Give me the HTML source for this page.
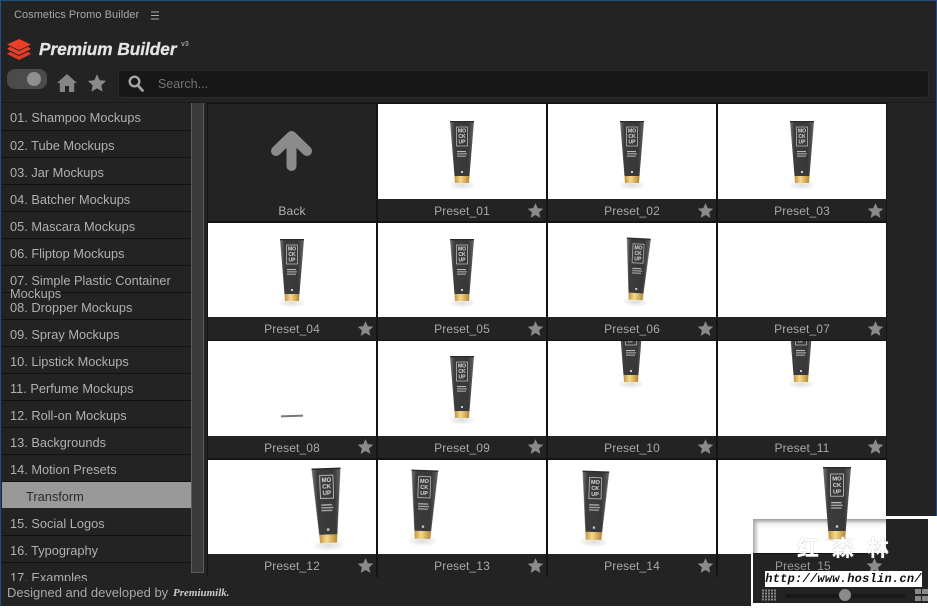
<!DOCTYPE html>
<html><head><meta charset="utf-8"><style>
html,body{margin:0;padding:0;background:#232323}
#r{position:relative;width:937px;height:608px;overflow:hidden;background:#232323;font-family:"Liberation Sans",sans-serif;color:#b4b4b4}
#r div,#r svg{position:absolute}
.frame{left:0;top:0;width:935px;height:606px;border:1px solid #1f4f86;z-index:4;pointer-events:none}
.si{left:2px;width:189px;height:26px;border-bottom:1px solid #111;font-size:12.800px;line-height:27px;text-indent:8px;color:#b0b0b0;white-space:nowrap}
.c{width:168px;height:117px;background:#232323;overflow:hidden}
.w{left:0;top:0;width:168px;height:95px;background:#fff;overflow:hidden}
.l{left:0;top:95px;width:168px;height:22px;line-height:25px;text-align:center;font-size:12px;letter-spacing:.12px;color:#a9a9a9}
.e .w{height:94px}.e .l{top:94px}
.tube{filter:blur(.35px)}
</style></head><body><div id="r">
<svg width="0" height="0" style="left:0;top:0"><defs>
<linearGradient id="g" x1="0" x2="1" y1="0" y2="0"><stop offset="0" stop-color="#777"/><stop offset=".18" stop-color="#3c3c3c"/><stop offset=".75" stop-color="#383838"/><stop offset="1" stop-color="#666"/></linearGradient>
<linearGradient id="cp" x1="0" x2="1" y1="0" y2="0"><stop offset="0" stop-color="#c0913c"/><stop offset=".4" stop-color="#f5d98c"/><stop offset="1" stop-color="#b5862f"/></linearGradient>
<radialGradient id="sh"><stop offset="0" stop-color="#bbb" stop-opacity=".5"/><stop offset="1" stop-color="#bbb" stop-opacity="0"/></radialGradient>
<symbol id="t" viewBox="0 0 24 72" overflow="visible">
<ellipse cx="12" cy="64" rx="15" ry="5" fill="url(#sh)"/>
<path d="M0 0H24L19.500 55H4.500Z" fill="url(#g)"/>
<path d="M0 0H24V1.200H0Z" fill="#2a2a2a"/>
<rect x="6.500" y="6" width="11" height="19" fill="none" stroke="#ddd" stroke-width=".6"/>
<text x="12" y="11.500" text-anchor="middle" font-family="Liberation Sans" font-weight="bold" font-size="5" fill="#ddd">MO</text>
<text x="12" y="17" text-anchor="middle" font-family="Liberation Sans" font-weight="bold" font-size="5" fill="#ddd">CK</text>
<text x="12" y="22.500" text-anchor="middle" font-family="Liberation Sans" font-weight="bold" font-size="5" fill="#ddd">UP</text>
<rect x="7" y="30" width="9" height="1.100" fill="#bbb"/><rect x="7" y="32.300" width="10" height="1.100" fill="#aaa"/><rect x="7" y="34.600" width="9" height="1.100" fill="#aaa"/>
<rect x="11" y="50" width="2" height="2" fill="#ccc"/>
<path d="M4.500 55H19.500L19 62H5Z" fill="url(#cp)"/>
</symbol>
<symbol id="s" viewBox="0 0 24 24"><path d="M12 1.500l3.200 7.200 7.800.8-5.900 5.200 1.700 7.700L12 18.400l-6.800 4 1.700-7.700L1 9.500l7.800-.8z" fill="#8a8a8a"/></symbol>
</defs></svg>

<div style="left:14px;top:8px;font-size:11px;letter-spacing:.05px;color:#a8a8a8;line-height:15px;white-space:nowrap">Cosmetics Promo Builder</div>
<svg style="left:151px;top:11px" width="9" height="9"><path d="M0 1H8M0 4.500H8M0 8H8" stroke="#aaa" stroke-width="1"/></svg>

<svg style="left:6px;top:38px" width="26" height="23" viewBox="0 0 26 23"><path d="M13 1L25 6.500 13 12 1 6.500Z" fill="#ea4029"/><path d="M4 8.800L1 11 13 17 25 11l-3-2.200L13 13Z" fill="#ea4029"/><path d="M4 13.800L1 16 13 22 25 16l-3-2.200L13 18Z" fill="#e03a26"/></svg>
<div style="left:39px;top:39px;font-size:17.200px;font-weight:bold;font-style:italic;color:#e4e4e4;-webkit-text-stroke:.3px #e4e4e4;line-height:21px;white-space:nowrap">Premium Builder</div>
<div style="left:181px;top:41px;font-size:7px;font-weight:bold;color:#999;line-height:8px">v3</div>

<div style="left:7px;top:69px;width:40px;height:20px;border-radius:8px;background:#4b4b4b"></div>
<div style="left:27px;top:72px;width:14px;height:14px;border-radius:50%;background:#8f8f8f"></div>
<svg style="left:57px;top:74px" width="20" height="18" viewBox="0 0 20 18"><path d="M10 0L0 9H2.800V18H8V12H12V18H17.200V9H20Z" fill="#858585"/></svg>
<svg style="left:87px;top:73px" width="20" height="20"><use href="#s" width="20" height="20"/></svg>
<div style="left:118px;top:70px;width:809px;height:26px;border-radius:4px;background:#171717;border:1px solid #2a2a2a"></div>
<svg style="left:128px;top:75px" width="16" height="17" viewBox="0 0 16 17"><circle cx="6.500" cy="6.500" r="4.800" fill="none" stroke="#a5a5a5" stroke-width="2.400"/><path d="M10 10.500L14.500 15.500" stroke="#a5a5a5" stroke-width="2.800" stroke-linecap="round"/></svg>
<div style="left:158px;top:76px;font-size:12.500px;color:#747474;line-height:16px">Search...</div>
<div style="left:2px;top:102px;width:933px;height:1px;background:#181818"></div>

<div class="si" style="top:104px">01. Shampoo Mockups</div>
<div class="si" style="top:132px;height:25px">02. Tube Mockups</div>
<div class="si" style="top:159px;height:25px">03. Jar Mockups</div>
<div class="si" style="top:186px;height:25px">04. Batcher Mockups</div>
<div class="si" style="top:213px;height:25px">05. Mascara Mockups</div>
<div class="si" style="top:240px;height:25px">06. Fliptop Mockups</div>
<div class="si" style="top:267px;height:25px">07. Simple Plastic Container</div>
<div class="si" style="top:280px;border:0;height:14px;line-height:27px;overflow:visible;background:transparent">Mockups</div>
<div class="si" style="top:294px;height:25px">08. Dropper Mockups</div>
<div class="si" style="top:321px;height:25px">09. Spray Mockups</div>
<div class="si" style="top:348px;height:25px">10. Lipstick Mockups</div>
<div class="si" style="top:375px;height:25px">11. Perfume Mockups</div>
<div class="si" style="top:402px;height:25px">12. Roll-on Mockups</div>
<div class="si" style="top:429px;height:25px">13. Backgrounds</div>
<div class="si" style="top:456px;height:25px">14. Motion Presets</div>
<div class="si" style="top:482px;background:#999;color:#2b2b2b;text-indent:24px;border-bottom:0;height:26px;line-height:29px">Transform</div>
<div class="si" style="top:510px;height:25px">15. Social Logos</div>
<div class="si" style="top:537px;height:25px">16. Typography</div>
<div class="si" style="top:564px;border:0;height:17px;overflow:hidden">17. Examples</div>

<div style="left:191px;top:103px;width:11px;height:469px;background:#3a3a3a;border:1px solid #5a5e66;border-top:0"></div>
<div style="left:207px;top:103px;width:680px;height:474px;background:#141414"></div>

<div class="c" style="left:208px;top:104px"><svg style="left:62px;top:26px" width="43" height="41" viewBox="0 0 43 41"><path d="M21.500 6L6 21M21.500 6L37 21M21.500 6V36" fill="none" stroke="#8b8b8b" stroke-width="10" stroke-linecap="round" stroke-linejoin="round"/></svg><div class="l" style="color:#b0b0b0">Back</div></div>

<div class="c" style="left:378px;top:104px"><div class="w"><svg class="tube" style="left:72px;top:17px" width="24" height="72"><use href="#t" width="24" height="72"/></svg></div><div class="l">Preset_01</div><svg style="left:149px;top:98px" width="17" height="17"><use href="#s" width="17" height="17"/></svg></div>
<div class="c" style="left:548px;top:104px"><div class="w"><svg class="tube" style="left:72px;top:17px" width="24" height="72"><use href="#t" width="24" height="72"/></svg></div><div class="l">Preset_02</div><svg style="left:149px;top:98px" width="17" height="17"><use href="#s" width="17" height="17"/></svg></div>
<div class="c" style="left:718px;top:104px"><div class="w"><svg class="tube" style="left:72px;top:17px" width="24" height="72"><use href="#t" width="24" height="72"/></svg></div><div class="l">Preset_03</div><svg style="left:149px;top:98px" width="17" height="17"><use href="#s" width="17" height="17"/></svg></div>

<div class="c e" style="left:208px;top:223px"><div class="w"><svg class="tube" style="left:72px;top:16px" width="24" height="72"><use href="#t" width="24" height="72"/></svg></div><div class="l">Preset_04</div><svg style="left:149px;top:97px" width="17" height="17"><use href="#s" width="17" height="17"/></svg></div>
<div class="c e" style="left:378px;top:223px"><div class="w"><svg class="tube" style="left:72px;top:16px" width="24" height="72"><use href="#t" width="24" height="72"/></svg></div><div class="l">Preset_05</div><svg style="left:149px;top:97px" width="17" height="17"><use href="#s" width="17" height="17"/></svg></div>
<div class="c e" style="left:548px;top:223px"><div class="w"><svg class="tube" style="left:77px;top:15px;transform:rotate(3deg)" width="24" height="72"><use href="#t" width="24" height="72"/></svg></div><div class="l">Preset_06</div><svg style="left:149px;top:97px" width="17" height="17"><use href="#s" width="17" height="17"/></svg></div>
<div class="c e" style="left:718px;top:223px"><div class="w"></div><div class="l">Preset_07</div><svg style="left:149px;top:97px" width="17" height="17"><use href="#s" width="17" height="17"/></svg></div>

<div class="c" style="left:208px;top:341px"><div class="w"><div style="left:73px;top:74px;width:22px;height:2px;background:#777;transform:rotate(-2deg)"></div></div><div class="l">Preset_08</div><svg style="left:149px;top:97px" width="17" height="17"><use href="#s" width="17" height="17"/></svg></div>
<div class="c" style="left:378px;top:341px"><div class="w"><svg class="tube" style="left:72px;top:13px" width="24" height="76"><use href="#t" width="24" height="76"/></svg></div><div class="l">Preset_09</div><svg style="left:149px;top:97px" width="17" height="17"><use href="#s" width="17" height="17"/></svg></div>
<div class="c" style="left:548px;top:341px"><div class="w"><svg class="tube" style="left:71px;top:-21px" width="24" height="72"><use href="#t" width="24" height="72"/></svg></div><div class="l">Preset_10</div><svg style="left:149px;top:97px" width="17" height="17"><use href="#s" width="17" height="17"/></svg></div>
<div class="c" style="left:718px;top:341px"><div class="w"><svg class="tube" style="left:71px;top:-21px" width="24" height="72"><use href="#t" width="24" height="72"/></svg></div><div class="l">Preset_11</div><svg style="left:149px;top:97px" width="17" height="17"><use href="#s" width="17" height="17"/></svg></div>

<div class="c e" style="left:208px;top:460px"><div class="w"><svg class="tube" style="left:105px;top:8px;transform:rotate(-2deg)" width="29" height="87"><use href="#t" width="29" height="87"/></svg></div><div class="l">Preset_12</div><svg style="left:149px;top:97px" width="17" height="17"><use href="#s" width="17" height="17"/></svg></div>
<div class="c e" style="left:378px;top:460px"><div class="w"><svg class="tube" style="left:32px;top:10px;transform:rotate(2deg)" width="27" height="80"><use href="#t" width="27" height="80"/></svg></div><div class="l">Preset_13</div><svg style="left:149px;top:97px" width="17" height="17"><use href="#s" width="17" height="17"/></svg></div>
<div class="c e" style="left:548px;top:460px"><div class="w"><svg class="tube" style="left:33px;top:11px;transform:rotate(2deg)" width="27" height="80"><use href="#t" width="27" height="80"/></svg></div><div class="l">Preset_14</div><svg style="left:149px;top:97px" width="17" height="17"><use href="#s" width="17" height="17"/></svg></div>
<div class="c e" style="left:718px;top:460px"><div class="w"></div></div>

<div style="left:2px;top:581px;width:933px;height:24px;background:#232323"></div>
<div style="left:7px;top:585px;font-size:13px;color:#a8a8a8;line-height:16px;white-space:nowrap">Designed and developed by</div>
<div style="left:173px;top:585px;font-family:'Liberation Serif',serif;font-style:italic;font-weight:bold;font-size:11px;color:#ccc;line-height:16px">Premiumilk.</div>
<div class="frame"></div>

<!-- watermark overlay -->
<div style="left:751px;top:516px;width:186px;height:92px;background:#fff;z-index:5"></div>
<div style="left:753px;top:519px;width:175px;height:84px;background:#232323;z-index:6"></div>
<div style="left:753px;top:519px;width:133px;height:34px;z-index:7;background:linear-gradient(#9a9a9a,#f4f4f4 5px,#fff 10px)"></div>
<div style="left:753px;top:519px;width:6px;height:34px;z-index:7;background:linear-gradient(90deg,#aaa,rgba(255,255,255,0))"></div>
<div style="left:823px;top:467px;width:28px;height:74px;overflow:hidden;z-index:8"><svg class="tube" style="left:0;top:0" width="28" height="84"><use href="#t" width="28" height="84"/></svg></div>
<div style="left:754px;top:553px;width:132px;height:1px;background:#111;z-index:7"></div>
<div style="left:797px;top:534px;z-index:9;font-family:'Noto Sans CJK SC',sans-serif;font-weight:bold;font-size:22px;letter-spacing:13px;color:#fff;text-shadow:0 0 1px #999;line-height:26px;white-space:nowrap">红森林</div>
<div style="left:775px;top:559px;z-index:9;font-size:12px;letter-spacing:.12px;color:#999;line-height:15px">Preset_15</div>
<svg style="left:866px;top:557px;z-index:9" width="17" height="17"><use href="#s" width="17" height="17"/></svg>
<div style="left:765px;top:571px;width:157px;height:16px;background:#fff;z-index:10;font-family:'Liberation Mono',monospace;font-weight:bold;font-style:italic;font-size:12px;letter-spacing:.25px;line-height:16px;color:#111;text-align:center;white-space:nowrap;overflow:hidden">http://www.hoslin.cn/</div>
<div style="left:785px;top:594px;width:120px;height:4px;background:#181818;border-radius:2px;z-index:9"></div>
<div style="left:839px;top:589px;width:12px;height:12px;border-radius:50%;background:#8a8a8a;z-index:10"></div>
<svg style="left:762px;top:589px;z-index:10" width="14" height="12"><path d="M0 1.500H14M0 4.500H14M0 7.500H14M0 10.500H14" stroke="#888" stroke-width="2" stroke-dasharray="2 1"/></svg>
<svg style="left:915px;top:589px;z-index:10" width="13" height="12"><path d="M0 0H6V5H0ZM7 0H13V5H7ZM0 7H6V12H0ZM7 7H13V12H7Z" fill="#888"/></svg>
<div style="left:0;top:606px;width:751px;height:2px;background:#fff;z-index:5"></div>
</div></body></html>
